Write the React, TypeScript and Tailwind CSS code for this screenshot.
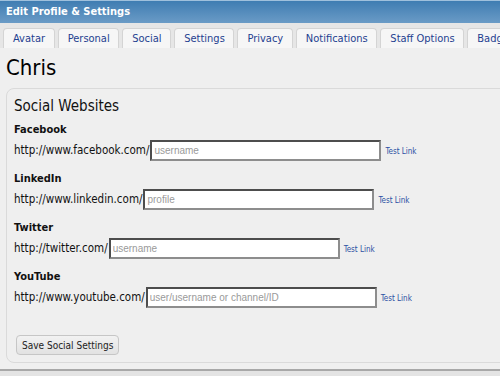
import React from 'react'

const tabs = ['Avatar', 'Personal', 'Social', 'Settings', 'Privacy', 'Notifications', 'Staff Options', 'Badges']

const sites = [
  {name: 'Facebook', prefix: 'http://www.facebook.com/', placeholder: 'username'},
  {name: 'LinkedIn', prefix: 'http://www.linkedin.com/', placeholder: 'profile'},
  {name: 'Twitter', prefix: 'http://twitter.com/', placeholder: 'username'},
  {name: 'YouTube', prefix: 'http://www.youtube.com/', placeholder: 'user/username or channel/ID'},
]

const tahoma = "font-['DejaVu_Sans_Condensed','DejaVu_Sans',sans-serif]"

function SiteRow({name, prefix, placeholder}: (typeof sites)[number]) {
  return (
    <div className="mb-[11px]">
      <div className="h-[14px] text-[11px] leading-[14px] font-bold text-[#111]">{name}</div>
      <div className="mt-[3px] flex items-center">
        <span className="pr-[1px] text-[11.5px] text-[#111]">{prefix}</span>
        <input
          placeholder={placeholder}
          className="h-[21px] w-[231px] border-2 border-t-[#4d4d4d] border-l-[#4d4d4d] border-r-[#8d8d8d] border-b-[#8d8d8d] bg-white px-[2px] font-['Liberation_Sans',sans-serif] text-[10px] outline-none placeholder:text-[#9a9a9a]"
        />
        <a className="ml-[4px] mt-[3px] text-[8px] text-[#2b4fa3]">Test Link</a>
      </div>
    </div>
  )
}

export default function App() {
  return (
    <div className={`${tahoma} relative h-[376px] w-[500px] overflow-hidden bg-[#efefef]`}>
      <div className="h-[23px] border-t border-[#9fc0dc] bg-gradient-to-b from-[#3f7db2] to-[#6a9bc6] pl-[6px] text-[11px] leading-[21px] font-bold text-white">
        Edit Profile &amp; Settings
      </div>
      <div className="flex gap-[3px] bg-[#e6e6e6] pl-[3px] pt-[5px] whitespace-nowrap">
        {tabs.map(t => (
          <div
            key={t}
            className="h-[20px] shrink-0 rounded-t-[4px] border border-b-0 border-[#d4d4d4] bg-[#f6f6f6] pl-[9px] pr-[8.6px] text-[11px] leading-[19px] text-[#1e3f90]"
          >
            {t}
          </div>
        ))}
      </div>
      <div className="px-[6px] pt-[5px]">
        <div className="h-[30px] text-[22px] leading-[30px] text-black">Chris</div>
        <div className="mt-[5px] w-[520px] rounded-[8px] border border-[#dadada] pl-[7px] pt-[8px] pb-[6px]">
          <div className="mb-[8px] h-[18px] text-[15px] leading-[18px] text-[#111]">Social Websites</div>
          {sites.map(s => (
            <SiteRow key={s.name} {...s} />
          ))}
          <button className="ml-[2px] mt-[16px] h-[20px] rounded-[4px] border border-[#c6c6c6] bg-gradient-to-b from-[#f2f2f2] to-[#e2e2e2] px-[5px] text-[10px] text-[#222]">
            Save Social Settings
          </button>
        </div>
      </div>
      <div className="mt-[6px] h-[2px] bg-[#a8a8a8]" />
      <div className="h-[10px] bg-[#e4e4e4]" />
    </div>
  )
}
